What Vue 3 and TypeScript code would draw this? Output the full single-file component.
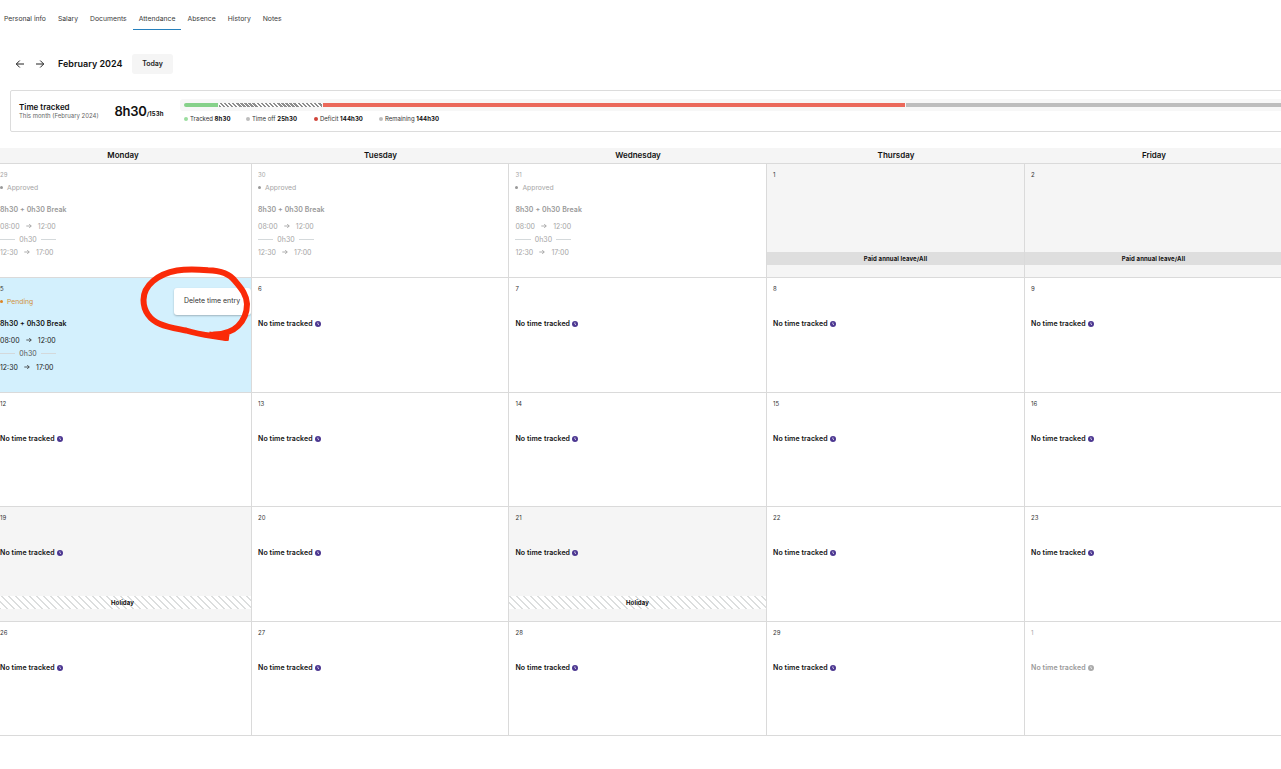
<script setup lang="ts">
interface Cell {
  day: number
  kind: 'entry' | 'leave' | 'untracked'
  status?: 'Approved' | 'Pending'
  muted?: boolean
  holiday?: boolean
}

const tabs = ['Personal info', 'Salary', 'Documents', 'Attendance', 'Absence', 'History', 'Notes']
const weekdays = ['Monday', 'Tuesday', 'Wednesday', 'Thursday', 'Friday']

const legend = [
  { name: 'Tracked', value: '8h30', tone: 'green' },
  { name: 'Time off', value: '25h30', tone: 'grey' },
  { name: 'Deficit', value: '144h30', tone: 'red' },
  { name: 'Remaining', value: '144h30', tone: 'grey' },
]

const approved = (day: number): Cell => ({ day, kind: 'entry', status: 'Approved', muted: true })
const open = (day: number, extra: Partial<Cell> = {}): Cell => ({ day, kind: 'untracked', ...extra })

const weeks: Cell[][] = [
  [approved(29), approved(30), approved(31), { day: 1, kind: 'leave' }, { day: 2, kind: 'leave' }],
  [{ day: 5, kind: 'entry', status: 'Pending' }, open(6), open(7), open(8), open(9)],
  [open(12), open(13), open(14), open(15), open(16)],
  [open(19, { holiday: true }), open(20), open(21, { holiday: true }), open(22), open(23)],
  [open(26), open(27), open(28), open(29), open(1, { muted: true })],
]
</script>

<template>
  <div class="page">
    <nav class="tabs">
      <a v-for="t in tabs" :key="t" class="tab" :class="{ active: t === 'Attendance' }">{{ t }}</a>
    </nav>

    <div class="toolbar">
      <svg class="nav-arrow" viewBox="0 0 10 10"><path d="M9 5H1.3M4.8 1.5 1.3 5l3.5 3.5" /></svg>
      <svg class="nav-arrow" viewBox="0 0 10 10"><path d="M1 5h7.7M5.2 1.5 8.7 5 5.2 8.5" /></svg>
      <h1>February 2024</h1>
      <button class="today">Today</button>
    </div>

    <section class="summary">
      <div class="summary-title">
        <strong>Time tracked</strong>
        <span>This month (February 2024)</span>
      </div>
      <div class="total"><b>8h30</b><small>/153h</small></div>
      <div class="progress">
        <div class="track">
          <i class="seg tracked"></i>
          <i class="seg off"></i>
          <i class="seg deficit"></i>
          <i class="seg remaining"></i>
        </div>
        <div class="legend">
          <span v-for="l in legend" :key="l.name" class="legend-item" :class="l.name.toLowerCase().replace(' ', '-')">
            <i class="dot" :class="l.tone"></i>{{ l.name }}&nbsp;<b>{{ l.value }}</b>
          </span>
        </div>
      </div>
    </section>

    <section class="calendar">
      <div class="weekdays">
        <div v-for="d in weekdays" :key="d">{{ d }}</div>
      </div>
      <div class="days">
        <template v-for="(week, w) in weeks" :key="w">
          <div
            v-for="c in week"
            :key="c.day"
            class="cell"
            :class="{ muted: c.muted, shaded: c.kind === 'leave' || c.holiday, pending: c.status === 'Pending' }"
          >
            <div class="date">{{ c.day }}</div>
            <template v-if="c.kind === 'entry'">
              <div class="status"><i></i>{{ c.status }}</div>
              <div class="headline">8h30 + 0h30 Break</div>
              <div class="shift first">
                <span>08:00</span>
                <svg viewBox="0 0 6 6"><path d="M.3 3h5M3.2 1l2 2-2 2" /></svg>
                <span>12:00</span>
              </div>
              <div class="pause"><span>0h30</span></div>
              <div class="shift last">
                <span>12:30</span>
                <svg viewBox="0 0 6 6"><path d="M.3 3h5M3.2 1l2 2-2 2" /></svg>
                <span>17:00</span>
              </div>
            </template>
            <div v-if="c.kind === 'untracked'" class="headline untracked">
              No time tracked
              <svg viewBox="0 0 6 6"><circle cx="3" cy="3" r="3" /><path d="M2.9 1.4V3.1l1.1.8" /></svg>
            </div>
            <div v-if="c.kind === 'leave'" class="band">Paid annual leave/All</div>
            <div v-if="c.holiday" class="band holiday">Holiday</div>
            <template v-if="c.status === 'Pending'">
              <div class="menu">Delete time entry</div>
              <svg class="annotation" viewBox="0 0 120 84">
                <path
                  d="M88 73 75 71C64 69.500 56 68 48 65.500C38 63.500 30 62.500 22 59C12 55 5.500 46 5.500 35C5.500 20 20 9 39 5.500C50 3.800 60 4.500 70 5.200C84 5.500 92 9 97 16C104 24 108.500 30 109 39C109 48 106 55 100 61C94 67 87 69 76 69.500"
                />
                <path class="tip" d="M74 70 88 72.500" />
              </svg>
            </template>
          </div>
        </template>
      </div>
    </section>
  </div>
</template>

<style>
html,
body {
  margin: 0;
  background: #fff;
  overflow: hidden;
}
</style>

<style scoped>
.page {
  width: 1281px;
  height: 769px;
  overflow: hidden;
  font-family: Inter, 'Liberation Sans', sans-serif;
  color: #111;
  font-size: 7px;
}
.tabs {
  display: flex;
  gap: 2px;
  height: 30px;
  margin-left: -1px;
}
.tab {
  box-sizing: border-box;
  padding: 14px 5px 0;
  height: 30px;
  line-height: 10px;
  font-size: 6.8px;
  color: #3a3a3a;
  white-space: nowrap;
}
.tab.active {
  padding: 14px 5.8px 0;
  margin: 0 -0.7px;
  border-bottom: 1px solid #2680bd;
}
.toolbar {
  display: flex;
  align-items: center;
  height: 20px;
  margin: 24px 0 0 15px;
}
.nav-arrow {
  width: 10px;
  height: 10px;
  margin-right: 10px;
  fill: none;
  stroke: #222;
  stroke-width: 1;
}
h1 {
  margin: 0 0 0 3px;
  width: 74px;
  font-size: 9px;
  font-weight: 600;
  line-height: 20px;
  white-space: nowrap;
}
.today {
  width: 41px;
  height: 20px;
  padding: 0;
  border: 0;
  border-radius: 3px;
  background: #f5f5f5;
  font: 600 7px/20px Inter, sans-serif;
  color: #222;
}
.summary {
  box-sizing: border-box;
  display: flex;
  width: 1290px;
  height: 42px;
  margin: 16px 0 0 10px;
  border: 1px solid #dcdcdc;
  border-radius: 2px;
}
.summary-title {
  width: 96px;
  padding: 11px 0 0 8px;
}
.summary-title strong,
.summary-title span {
  display: block;
  white-space: nowrap;
}
.summary-title strong {
  font-size: 8px;
  font-weight: 600;
  line-height: 10px;
}
.summary-title span {
  font-size: 6px;
  line-height: 8px;
  color: #666;
}
.total {
  width: 65px;
  margin-left: -0.5px;
  margin-right: 0.5px;
  line-height: 40px;
  white-space: nowrap;
}
.total b {
  font-size: 13px;
  font-weight: 600;
  letter-spacing: -0.25px;
}
.total small {
  font-size: 6px;
  font-weight: 700;
  letter-spacing: 0.15px;
}
.progress {
  flex: 1;
  padding-top: 8px;
}
.track {
  display: flex;
  align-items: center;
  gap: 1px;
  height: 12px;
  padding-left: 4px;
  background: #f7f7f7;
  border-radius: 3px 0 0 3px;
}
.seg {
  height: 4px;
}
.seg.tracked {
  width: 34px;
  background: #86d18a;
  border-radius: 2px 0 0 2px;
}
.seg.off {
  width: 103px;
  background: repeating-linear-gradient(45deg, #8e8e8e 0 1.8px, #fff 1.8px 2.9px);
}
.seg.deficit {
  width: 582px;
  background: #eb695b;
}
.seg.remaining {
  flex: 1;
  background: #bdbdbd;
}
.legend {
  display: flex;
  padding: 3px 0 0 4px;
  line-height: 9px;
  font-size: 6px;
  color: #333;
}
.legend-item {
  display: flex;
  align-items: center;
  white-space: nowrap;
}
.legend-item.tracked {
  width: 62px;
}
.legend-item.time-off {
  width: 68px;
}
.legend-item.deficit {
  width: 65px;
}
.legend b {
  font-weight: 700;
  letter-spacing: 0.1px;
  color: #111;
}
.dot {
  width: 4px;
  height: 4px;
  margin-right: 2px;
  border-radius: 50%;
}
.dot.green {
  background: #9bdd9f;
}
.dot.grey {
  background: #bdbdbd;
}
.dot.red {
  background: #d0443a;
}
.calendar {
  width: 1289px;
  margin: 16px 0 0 -7px;
}
.weekdays,
.days {
  display: grid;
  grid-template-columns: 258px 257px 258px 258px 258px;
}
.weekdays {
  height: 15px;
  background: #f5f5f5;
  text-align: center;
  font-size: 8px;
  font-weight: 600;
  line-height: 15px;
}
.weekdays div {
  padding-left: 2px;
}
.days {
  grid-template-rows: 114px 115px 114px 115px 114px;
  border-bottom: 1px solid #dadada;
}
.cell {
  position: relative;
  display: flex;
  flex-direction: column;
  min-width: 0;
  box-sizing: border-box;
  padding: 7px 0 0 6px;
  border-top: 1px solid #dadada;
  border-left: 1px solid #dadada;
}
.cell:nth-child(5n + 3) {
  padding-left: 6.4px;
}
.cell.shaded {
  background: #f5f5f5;
}
.cell.pending {
  background: #d3f0fd;
}
.date {
  height: 8px;
  line-height: 8px;
  font-size: 6px;
  letter-spacing: 0.1px;
  color: #333;
}
.status {
  display: flex;
  align-items: center;
  height: 10px;
  margin-top: 3px;
  font-size: 6.8px;
  color: #d0903e;
}
.status i {
  width: 3px;
  height: 3px;
  margin-right: 4px;
  border-radius: 50%;
  background: #dc8425;
}
.headline {
  height: 10px;
  margin-top: 13px;
  font-size: 7px;
  font-weight: 600;
  letter-spacing: 0.08px;
  line-height: 10px;
  color: #111;
  white-space: nowrap;
}
.headline.untracked {
  display: flex;
  align-items: center;
  margin-top: 26px;
}
.headline svg {
  width: 6px;
  height: 6px;
  margin-left: 2.1px;
  fill: #4c3791;
}
.headline svg path {
  fill: none;
  stroke: #fff;
  stroke-width: 0.7;
}
.shift {
  display: flex;
  align-items: center;
  height: 10px;
  font-size: 7px;
  color: #222;
}
.shift.first {
  margin-top: 6px;
}
.shift svg {
  width: 6px;
  height: 6px;
  margin: 0 6.2px 0 6px;
  fill: none;
  stroke: #333;
  stroke-width: 0.8;
}
.pause {
  display: flex;
  align-items: center;
  width: 56px;
  height: 10px;
  margin: 3px 0;
  font-size: 7px;
  color: #555;
}
.pause span {
  padding: 0 4px;
}
.pause::before,
.pause::after {
  content: '';
  flex: 1;
  height: 1px;
  background: #d4d9db;
}
.pending .shift.last {
  margin-top: 1px;
}
.muted .date,
.muted .status,
.muted .shift,
.muted .pause {
  color: #a5a5a5;
}
.muted .headline {
  color: #999;
}
.muted .status i {
  background: #999;
}
.muted .shift svg {
  stroke: #999;
}
.muted .headline svg {
  fill: #aaa;
}
.band {
  height: 13px;
  margin: auto 0 12px -6px;
  background: #dedede;
  text-align: center;
  font-size: 6px;
  font-weight: 700;
  letter-spacing: 0.11px;
  line-height: 13px;
}
.cell:nth-child(5n + 3) .band {
  margin-left: -6.4px;
}
.band.holiday {
  background: repeating-linear-gradient(45deg, #fff 0 3.9px, #dcdede 3.9px 4.95px);
}
.menu {
  position: absolute;
  top: 10px;
  right: 0;
  box-sizing: border-box;
  width: 77px;
  height: 27px;
  padding-left: 10px;
  border-radius: 3px;
  background: #fff;
  box-shadow: 0 1px 2px rgba(0, 0, 0, 0.25);
  font-size: 6.95px;
  line-height: 26px;
  color: #333;
  white-space: nowrap;
}
.annotation {
  position: absolute;
  left: 144px;
  top: -13px;
  width: 120px;
  height: 84px;
  z-index: 2;
  fill: none;
  stroke: #fa2a08;
  stroke-width: 6;
  stroke-linecap: round;
  stroke-linejoin: round;
}
.annotation .tip {
  stroke-linecap: square;
}
</style>
